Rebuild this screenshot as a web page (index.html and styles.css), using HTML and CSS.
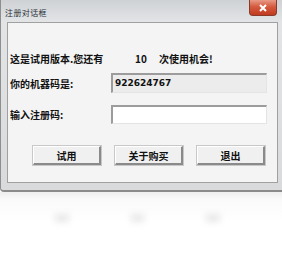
FILE: index.html
```html
<!DOCTYPE html>
<html>
<head>
<meta charset="utf-8">
<link rel="stylesheet" href="styles.css">
</head>
<body>
<div class="window">
  <div class="titlebar">
    <span class="title">注册对话框</span>
    <span class="close"><svg width="10" height="8" viewBox="0 0 10 8"><path d="M2 1 L8 7 M8 1 L2 7" stroke="#fff" stroke-width="2"/></svg></span>
  </div>
  <div class="client">
    <div class="row1">
      <span class="t1">这是试用版本.您还有</span>
      <span class="count">10</span>
      <span class="t2">次使用机会!</span>
    </div>
    <div class="row field1">
      <span class="label">你的机器码是:</span>
      <span class="input readonly">922624767</span>
    </div>
    <div class="row field2">
      <span class="label">输入注册码:</span>
      <span class="input"></span>
    </div>
    <div class="buttons">
      <span class="btn">试用</span>
      <span class="btn">关于购买</span>
      <span class="btn">退出</span>
    </div>
  </div>
</div>
<div class="reflection">
  <span class="ghost"></span>
  <span class="ghost"></span>
  <span class="ghost"></span>
</div>
</body>
</html>
```
FILE: styles.css
```css
html, body {
  margin: 0;
  padding: 0;
  background: #ffffff;
}
body {
  width: 282px;
  height: 272px;
  overflow: hidden;
  font-family: "Noto Sans CJK SC", "DejaVu Sans", sans-serif;
}
.window {
  width: 282px;
  height: 192px;
  box-sizing: border-box;
  padding: 0 4px 7px 6px;
  background: linear-gradient(#cfd2d5, #e2e4e6 22px, #d8dadc);
  border-left: 1px solid #8e8e8e;
  border-bottom: 2px solid #8a8a8a;
  border-radius: 0 0 0 4px;
  display: flex;
  flex-direction: column;
}
.titlebar {
  height: 22px;
  display: flex;
  align-items: flex-start;
  justify-content: space-between;
  flex: none;
}
.title {
  font-size: 8px;
  color: #2a2f3a;
  margin-top: 7px;
  margin-left: -2px;
  letter-spacing: 0.4px;
}
.close {
  width: 28px;
  height: 16px;
  margin-right: 1px;
  border-radius: 0 0 4px 4px;
  background: linear-gradient(#e89a86, #d45a3e 45%, #c13a20);
  border: 1px solid #8a3a2a;
  border-top: none;
  box-sizing: border-box;
  display: flex;
  align-items: center;
  justify-content: center;
}
.client {
  flex: 1;
  background: #f4f4f4;
  border: 1px solid #a0a0a0;
  box-sizing: border-box;
  padding: 29px 10px 0 2px;
  font-size: 10px;
  font-weight: 700;
  color: #111;
}
.row1 {
  height: 14px;
  line-height: 14px;
  display: flex;
  white-space: nowrap;
}
.t1 { width: 125px; }
.count { width: 24px; }
.row {
  display: flex;
  align-items: center;
}
.field1 { margin-top: 7px; }
.field2 { margin-top: 12px; }
.label {
  width: 101px;
  flex: none;
}
.input {
  width: 158px;
  height: 20px;
  box-sizing: border-box;
  border-top: 2px solid #9c9c9c;
  border-left: 2px solid #9c9c9c;
  border-right: 1px solid #e4e4e4;
  border-bottom: 1px solid #e4e4e4;
  background: #ffffff;
  font-family: "DejaVu Sans", sans-serif;
  font-size: 9px;
  line-height: 16px;
  padding-left: 2px;
}
.input.readonly { background: #ececec; }
.field2 .input { height: 19px; }
.buttons {
  display: flex;
  gap: 14px;
  margin-top: 22px;
  padding-left: 23px;
}
.btn {
  width: 68px;
  height: 19px;
  box-sizing: border-box;
  background: #f0f0f0;
  border-top: 1px solid #ffffff;
  border-left: 1px solid #ffffff;
  border-right: 2px solid #8a8a8a;
  border-bottom: 2px solid #8a8a8a;
  box-shadow: 0 0 0 1px #c8c8c8;
  display: flex;
  align-items: center;
  justify-content: center;
  font-size: 10px;
}
.reflection {
  height: 80px;
  display: flex;
  padding: 22px 0 0 55px;
  box-sizing: border-box;
  background: linear-gradient(#eeeeee, #fafafa 8px, #ffffff 30px);
}
.ghost {
  width: 22px;
  height: 8px;
  background: #e8e8e8;
  filter: blur(3px);
  margin-right: 62px;
}
```
